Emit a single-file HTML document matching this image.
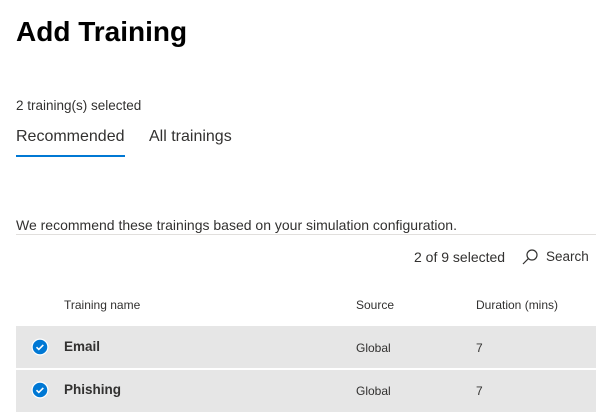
<!DOCTYPE html>
<html><head><style>
*{margin:0;padding:0;box-sizing:border-box}
body{width:607px;height:418px;background:#fff;font-family:"Liberation Sans",sans-serif;color:#323130;position:relative;overflow:hidden}
.a{position:absolute;white-space:nowrap}
</style></head><body>
<div class="a" style="left:16px;top:16px;font-size:28px;font-weight:bold;color:#000">Add Training</div>
<div class="a" style="left:16px;top:98px;font-size:13.5px">2 training(s) selected</div>
<div class="a" style="left:16px;top:128px;font-size:16px">Recommended</div>
<div class="a" style="left:16px;top:155px;width:109px;height:2px;background:#0078d4"></div>
<div class="a" style="left:149px;top:128px;font-size:16px">All trainings</div>
<div class="a" style="left:16px;top:217px;font-size:14px">We recommend these trainings based on your simulation configuration.</div>
<div class="a" style="left:16px;top:234px;width:580px;height:1px;background:#e1dfdd"></div>
<div class="a" style="left:414px;top:249px;font-size:14px">2 of 9 selected</div>
<svg class="a" style="left:521px;top:248px" width="18" height="18" viewBox="0 0 18 18"><circle cx="11" cy="7" r="5" fill="none" stroke="#323130" stroke-width="1.2"/><line x1="7.3" y1="10.7" x2="2" y2="16" stroke="#323130" stroke-width="1.2"/></svg>
<div class="a" style="left:546px;top:249px;font-size:13.5px">Search</div>
<div class="a" style="left:64px;top:298px;font-size:12px">Training name</div>
<div class="a" style="left:356px;top:298px;font-size:12px">Source</div>
<div class="a" style="left:476px;top:298px;font-size:12px">Duration (mins)</div>
<div class="a" style="left:16px;top:326px;width:580px;height:42px;background:#e6e6e6"></div>
<div class="a" style="left:16px;top:370px;width:580px;height:42px;background:#e6e6e6"></div>
<svg class="a" style="left:31px;top:338px" width="18" height="18" viewBox="0 0 18 18"><circle cx="9" cy="9" r="8.5" fill="#fff"/><circle cx="9" cy="9" r="7.3" fill="#0078d4"/><path d="M5.5 9.2l2.3 2.2 4.5-4.5" fill="none" stroke="#fff" stroke-width="1.6"/></svg>
<svg class="a" style="left:31px;top:381px" width="18" height="18" viewBox="0 0 18 18"><circle cx="9" cy="9" r="8.5" fill="#fff"/><circle cx="9" cy="9" r="7.3" fill="#0078d4"/><path d="M5.5 9.2l2.3 2.2 4.5-4.5" fill="none" stroke="#fff" stroke-width="1.6"/></svg>
<div class="a" style="left:64px;top:339px;font-size:13.5px;font-weight:bold;color:#323130">Email</div>
<div class="a" style="left:356px;top:341px;font-size:12px">Global</div>
<div class="a" style="left:476px;top:341px;font-size:12px">7</div>
<div class="a" style="left:64px;top:382px;font-size:13.5px;font-weight:bold;color:#323130">Phishing</div>
<div class="a" style="left:356px;top:384px;font-size:12px">Global</div>
<div class="a" style="left:476px;top:384px;font-size:12px">7</div>
</body></html>
